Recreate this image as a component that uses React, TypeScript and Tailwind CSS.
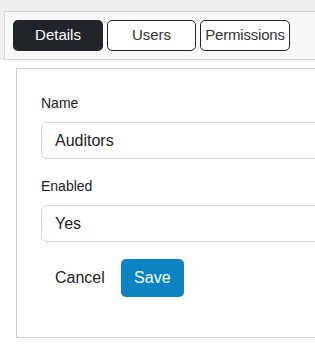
export default function App() {
  return (
    <div className="w-[315px] h-[348px] overflow-hidden bg-white" style={{ fontFamily: '"Liberation Sans", Arial, sans-serif' }}>
      <div className="bg-[#efefef] pt-[11px] pl-[4px]">
        <div className="w-[340px] h-[49px] bg-[#f8f8f8] border border-[#d6d6d6] flex gap-[4px] pl-[8px] pt-[8px]">
          <button className="w-[90px] h-[31px] rounded-[5px] bg-[#212529] text-white text-[15px]">Details</button>
          <button className="w-[89px] h-[31px] rounded-[5px] bg-white border border-[#212529] text-[#333] text-[15px]">Users</button>
          <button className="w-[90px] h-[31px] rounded-[5px] bg-white border border-[#212529] text-[#333] text-[15px] tracking-[-0.2px]">Permissions</button>
        </div>
      </div>
      <div className="ml-[16px] mt-[8px] w-[340px] h-[270px] border border-[#cfcfcf] pl-[24px] pt-[25px]">
        <div className="text-[14px] text-[#222] leading-[18px]">Name</div>
        <div className="mt-[10px] h-[37px] rounded-[6px] border border-[#d4d4d4] flex items-center pl-[13px] text-[16px] text-[#222]">Auditors</div>
        <div className="mt-[18px] text-[14px] text-[#222] leading-[18px]">Enabled</div>
        <div className="mt-[10px] h-[37px] rounded-[6px] border border-[#d4d4d4] flex items-center pl-[13px] text-[16px] text-[#222]">Yes</div>
        <div className="mt-[17px] flex items-center">
          <span className="ml-[14px] text-[16px] text-[#222]">Cancel</span>
          <button className="ml-[16px] w-[63px] h-[38px] rounded-[5px] bg-[#0b84c1] text-white text-[16px]">Save</button>
        </div>
      </div>
    </div>
  );
}
